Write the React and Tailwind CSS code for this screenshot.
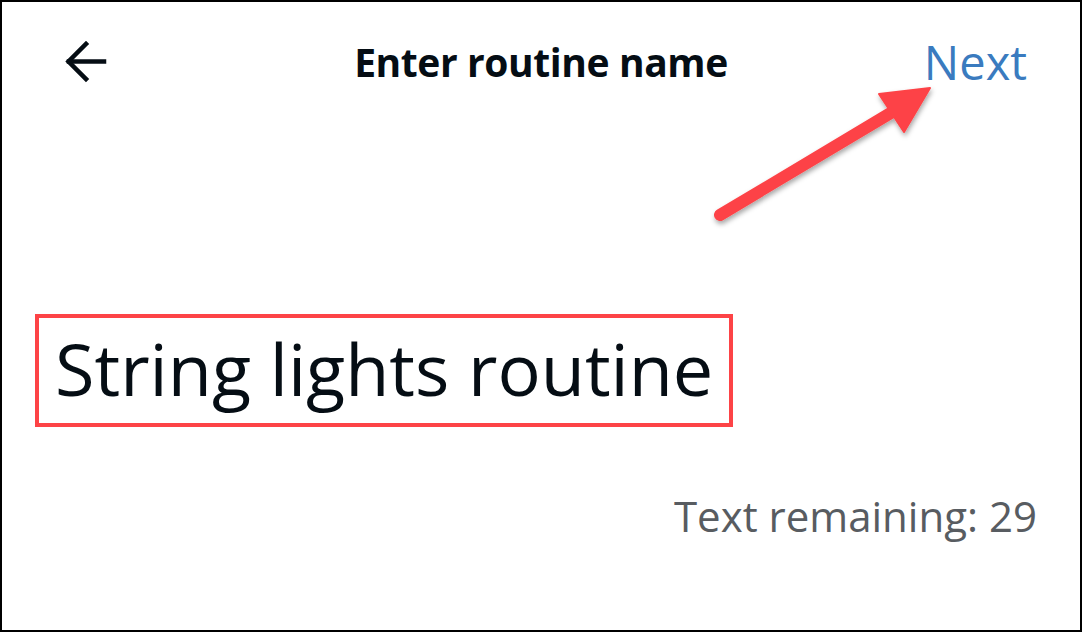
import React from 'react';

const BackArrow = () => (
  <svg width="44" height="44" viewBox="0 0 44 44" fill="none" stroke="#050d14" strokeWidth="4.5" strokeLinecap="square">
    <path d="M5 21.5H40" />
    <path d="M22 4L4.5 21.5L22 39" />
  </svg>
);

const Callout = () => (
  <svg className="absolute inset-0 pointer-events-none" width="1082" height="632" viewBox="0 0 1082 632">
    <defs>
      <filter id="shadow" x="-20%" y="-20%" width="140%" height="140%">
        <feDropShadow dx="1" dy="3" stdDeviation="2.5" floodColor="#000" floodOpacity="0.35" />
      </filter>
    </defs>
    <g filter="url(#shadow)" fill="#fd4346" stroke="#fd4346">
      <path d="M718 213L892 109" strokeWidth="12" strokeLinecap="round" />
      <path d="M877 92L928 86L902 130Z" strokeWidth="2" strokeLinejoin="round" />
    </g>
  </svg>
);

export default function App() {
  return (
    <div
      className="relative w-[1082px] h-[632px] bg-white border-2 border-black overflow-hidden"
      style={{ fontFamily: '"Open Sans", "Noto Sans", sans-serif' }}
    >
      <div className="grid grid-cols-[1fr_auto_1fr] items-center h-[122px] px-[53px] pb-[2px]">
        <div className="flex pl-[9px]">
          <BackArrow />
        </div>
        <h1 className="text-[39px] font-bold text-[#050d14] tracking-[-0.4px]">Enter routine name</h1>
        <div className="flex justify-end">
          <button className="text-[47px] text-[#3a7bbf] leading-none">Next</button>
        </div>
      </div>

      <div className="pl-[33px] pt-[190px]">
        <div className="inline-flex items-center h-[113px] border-4 border-[#fd4346] pl-[16px] pr-[16px]">
          <span className="text-[72px] text-[#050d14] leading-none pb-[6px]">String lights routine</span>
        </div>
      </div>

      <div className="flex justify-end pr-[43px] pt-[68px]">
        <span className="text-[42px] text-[#585c61] leading-none">Text remaining: 29</span>
      </div>

      <Callout />
    </div>
  );
}
